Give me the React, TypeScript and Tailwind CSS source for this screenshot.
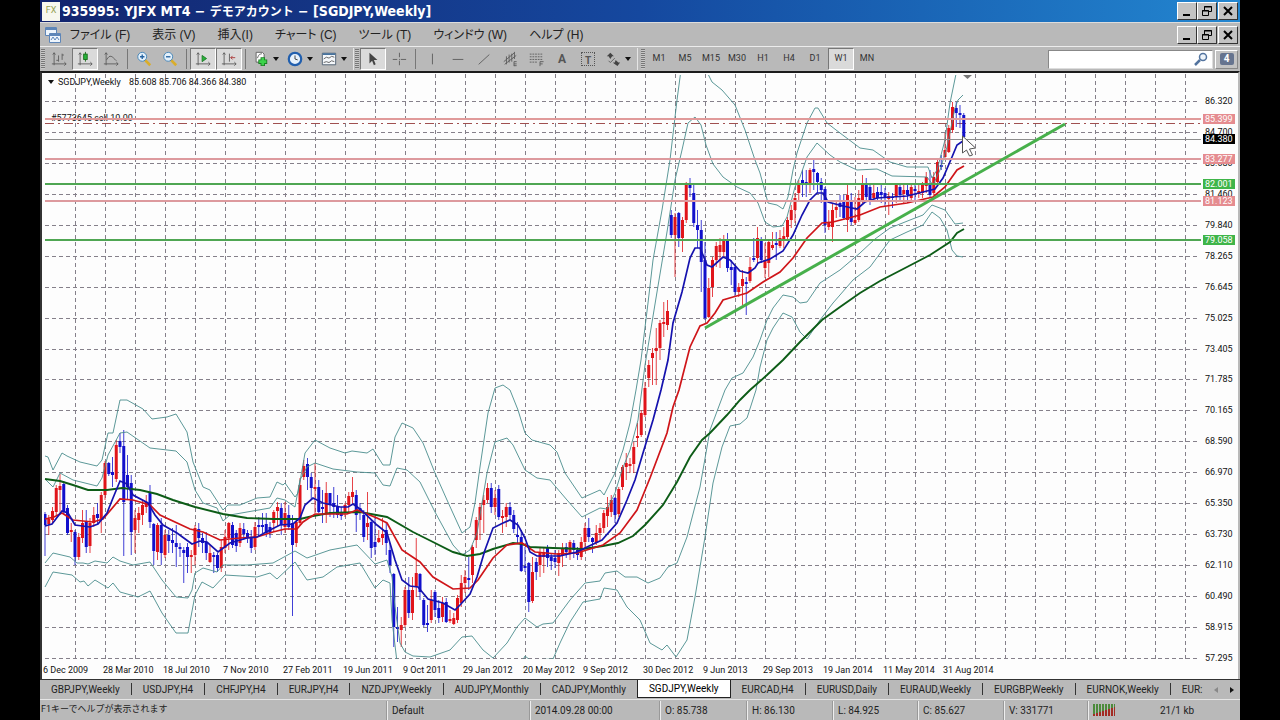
import type { ReactNode } from "react";
import clsx from "clsx";

// [high, open, close, low] on the chart's y axis, one entry per week
const candles: number[][] = [
  [512, 514, 525, 556], [515, 524, 519, 535], [507, 520, 511, 524], [485, 512, 488, 515], [474, 490, 486, 514], [481, 484, 512, 514],
  [505, 508, 533, 535], [523, 532, 530, 542], [530, 532, 557, 565], [533, 557, 537, 560], [510, 538, 523, 543], [510, 522, 547, 553],
  [518, 546, 523, 553], [507, 523, 515, 527], [503, 514, 518, 525], [492, 520, 495, 533], [461, 495, 463, 500], [462, 463, 474, 476],
  [457, 472, 475, 487], [440, 479, 445, 482], [433, 441, 447, 453], [430, 446, 502, 556], [455, 475, 487, 500], [475, 483, 532, 555],
  [510, 530, 518, 553], [507, 520, 513, 533], [500, 515, 505, 525], [495, 507, 502, 513], [485, 493, 522, 528], [523, 524, 551, 565],
  [523, 552, 525, 560], [518, 525, 553, 565], [530, 555, 535, 558], [530, 535, 541, 553], [528, 540, 543, 553], [525, 543, 547, 567],
  [543, 547, 549, 557], [547, 550, 553, 583], [543, 547, 557, 573], [550, 557, 555, 573], [525, 555, 528, 565], [523, 529, 538, 547],
  [533, 538, 543, 553], [532, 542, 553, 560], [545, 562, 553, 563], [552, 555, 557, 573], [553, 555, 568, 572], [540, 568, 547, 572],
  [530, 548, 537, 553], [522, 538, 523, 550], [522, 525, 545, 548], [530, 533, 546, 552], [523, 543, 528, 547], [523, 529, 534, 540],
  [530, 533, 537, 543], [530, 538, 548, 553], [522, 547, 527, 550], [517, 525, 527, 537], [513, 525, 527, 533], [513, 524, 533, 537],
  [522, 527, 533, 538], [510, 523, 512, 532], [502, 511, 507, 527], [503, 508, 525, 535], [502, 527, 513, 533], [505, 515, 527, 530],
  [515, 523, 545, 616], [518, 543, 522, 547], [478, 523, 485, 525], [460, 477, 466, 480], [458, 464, 477, 490], [473, 477, 488, 500],
  [463, 489, 487, 513], [480, 487, 512, 513], [490, 507, 509, 523], [482, 513, 493, 523], [493, 493, 505, 517], [487, 503, 507, 518],
  [495, 507, 515, 518], [507, 512, 516, 520], [503, 513, 505, 517], [492, 505, 496, 513], [477, 497, 492, 505], [490, 495, 515, 532],
  [503, 508, 513, 520], [510, 515, 537, 542], [492, 527, 523, 540], [520, 522, 548, 558], [517, 542, 547, 555], [530, 542, 538, 543],
  [518, 538, 534, 545], [523, 530, 543, 555], [543, 550, 565, 573], [573, 574, 627, 647], [607, 627, 629, 642], [617, 630, 625, 647],
  [587, 625, 590, 627], [577, 590, 613, 618], [577, 613, 590, 620], [538, 587, 573, 597], [573, 574, 592, 600], [598, 600, 625, 627],
  [605, 623, 625, 632], [590, 620, 600, 623], [590, 592, 610, 617], [600, 608, 618, 623], [597, 617, 603, 622], [598, 602, 622, 623],
  [610, 621, 619, 623], [613, 624, 618, 625], [595, 620, 598, 623], [575, 603, 583, 607], [570, 583, 577, 593], [557, 578, 580, 590],
  [545, 575, 547, 583], [517, 540, 520, 548], [503, 520, 507, 540], [495, 505, 500, 533], [483, 500, 488, 503], [483, 488, 507, 513],
  [490, 507, 498, 515], [485, 489, 517, 520], [510, 518, 516, 533], [503, 517, 507, 527], [502, 507, 515, 520], [510, 515, 529, 533],
  [522, 535, 537, 543], [530, 537, 571, 572], [547, 566, 568, 572], [562, 563, 602, 612], [557, 601, 572, 603], [558, 562, 572, 580],
  [548, 565, 552, 577], [547, 557, 552, 573], [545, 547, 558, 567], [553, 557, 561, 570], [550, 558, 562, 568], [550, 563, 553, 576],
  [543, 555, 548, 567], [543, 547, 552, 558], [540, 553, 542, 560], [540, 543, 550, 558], [547, 550, 555, 560], [537, 557, 542, 560],
  [523, 542, 528, 548], [518, 528, 537, 542], [537, 538, 542, 553], [525, 543, 533, 545], [523, 533, 528, 540], [510, 528, 513, 533],
  [497, 516, 507, 527], [495, 512, 500, 517], [497, 498, 515, 523], [487, 514, 489, 517], [465, 487, 467, 490], [453, 467, 463, 480],
  [458, 466, 464, 473], [442, 464, 447, 473], [423, 438, 436, 447], [410, 435, 413, 437], [382, 415, 388, 417], [360, 378, 365, 387],
  [348, 358, 353, 385], [328, 351, 348, 385], [320, 348, 323, 360], [302, 324, 322, 337], [300, 325, 311, 330], [210, 215, 235, 238],
  [213, 235, 217, 277], [212, 213, 238, 247], [217, 238, 220, 252], [182, 220, 185, 223], [178, 184, 188, 197], [185, 193, 223, 227],
  [210, 225, 230, 248], [220, 230, 262, 292], [242, 260, 318, 320], [278, 317, 288, 318], [257, 287, 260, 297], [242, 260, 246, 267],
  [238, 252, 245, 268], [235, 252, 240, 257], [233, 240, 268, 272], [260, 267, 270, 285], [265, 267, 292, 297], [283, 292, 287, 297],
  [270, 286, 279, 305], [277, 282, 284, 315], [257, 281, 267, 283], [238, 258, 260, 262], [227, 258, 238, 263], [237, 240, 260, 263],
  [243, 268, 260, 278], [240, 263, 242, 277], [232, 248, 245, 250], [232, 243, 245, 260], [230, 246, 238, 248], [227, 240, 236, 248],
  [217, 237, 220, 240], [205, 220, 210, 228], [193, 210, 198, 223], [180, 193, 183, 202], [170, 180, 185, 197], [170, 182, 184, 197],
  [168, 183, 170, 193], [160, 169, 172, 190], [172, 173, 182, 193], [178, 182, 190, 203], [187, 189, 225, 233], [210, 227, 222, 230],
  [203, 227, 210, 242], [200, 210, 207, 218], [195, 203, 207, 217], [195, 200, 218, 220], [185, 220, 195, 232], [193, 200, 222, 225],
  [197, 223, 220, 225], [190, 220, 198, 222], [175, 200, 185, 203], [178, 185, 197, 202], [185, 187, 202, 205], [185, 198, 193, 202],
  [187, 192, 198, 202], [185, 192, 195, 203], [188, 193, 198, 207], [192, 199, 196, 215], [193, 197, 198, 208], [183, 197, 185, 203],
  [183, 187, 195, 200], [183, 194, 190, 203], [185, 190, 195, 203], [185, 198, 187, 202], [185, 189, 191, 200], [185, 194, 191, 198],
  [182, 193, 185, 198], [172, 186, 177, 193], [170, 183, 195, 197], [172, 193, 177, 195], [158, 182, 162, 185], [155, 165, 167, 170],
  [133, 157, 150, 158], [125, 152, 128, 153], [102, 130, 107, 133], [102, 108, 113, 127], [105, 113, 115, 128], [113, 115, 137, 142],
];

const bands = [
  "45,456 48,457 53,470 62,453 67,456 80,462 97,466 102,460 108,433 113,433 120,400 127,400 143,409 152,419 167,417 176,414 187,432 193,462 203,487 210,490 223,510 228,505 240,505 257,498 270,497 277,482 283,485 285,483 295,497 298,493 305,453 315,440 330,448 345,453 352,451 367,453 373,449 383,465 390,465 395,437 402,423 413,428 423,443 435,473 447,500 462,533 470,527 475,503 480,467 488,413 495,388 503,385 510,390 518,410 525,433 532,440 550,445 557,452 565,473 582,498 600,490 604,495 610,483 615,473 623,450 630,423 636,390 641,360 648,303 653,260 662,210 670,160 677,100 681,70 706,70 712,82 722,90 735,105 745,130 755,160 760,173 768,203 777,205 783,209 788,197 793,170 797,153 807,123 815,108 818,108 827,123 840,133 860,148 873,150 890,162 907,167 928,167 932,178 937,170 945,140 950,103 956,74",
  "45,479 53,487 60,473 73,480 97,486 102,478 108,455 120,433 127,432 150,448 176,451 187,462 195,490 203,503 217,508 223,521 230,515 247,512 270,508 277,498 285,500 295,507 300,480 307,467 315,463 333,469 357,472 375,473 383,485 390,486 397,468 407,470 420,482 435,512 453,545 462,555 470,550 477,533 487,473 495,442 507,438 513,445 525,470 537,478 550,480 567,500 582,517 600,508 607,509 615,493 622,470 630,450 638,420 645,365 657,292 667,232 675,180 682,150 688,123 695,117 701,125 706,145 713,164 723,177 737,187 750,193 758,203 765,222 773,227 782,226 787,217 795,187 800,177 807,157 817,143 830,155 840,162 857,170 877,169 892,176 927,177 933,185 940,170 947,147 955,108 958,100 963,95",
  "45,563 53,553 70,557 77,563 83,563 88,564 95,561 107,563 113,557 120,561 133,565 150,562 162,580 176,597 188,598 192,590 195,573 203,568 217,572 223,565 247,565 273,563 295,551 307,558 330,550 357,545 375,564 387,560 392,577 395,607 400,643 405,652 413,656 430,657 450,650 462,637 472,636 483,650 493,658 507,643 517,627 525,618 537,627 543,624 553,623 570,600 585,583 600,581 605,573 617,571 625,577 637,577 648,583 660,578 668,567 677,563 687,537 700,487 710,430 725,390 732,378 743,373 753,357 760,340 767,320 773,308 783,295 793,297 800,303 807,302 820,283 840,270 860,253 875,239 890,228 910,220 923,215 932,205 945,210 955,224 963,223",
  "45,587 53,572 72,575 80,582 84,581 88,586 95,580 108,588 113,583 120,592 138,597 150,591 162,613 176,633 188,633 195,595 202,582 213,588 225,575 257,577 270,573 277,579 295,562 307,580 323,577 337,567 360,563 375,588 383,580 390,583 392,620 397,662 522,662 525,656 530,660 553,659 560,643 570,622 583,602 600,599 604,588 617,590 627,607 640,620 650,643 662,650 667,645 676,657 687,640 695,597 705,537 713,483 722,447 730,426 740,424 747,418 756,390 760,367 767,340 773,328 783,313 792,317 800,332 807,339 820,320 833,303 853,280 870,267 890,240 907,232 923,225 932,212 940,218 947,230 952,250 957,256 963,257",
];

const slowAverage =
  "45,479 60,481 73,485 88,490 107,490 122,488 140,490 157,494 173,500 195,507 223,514 247,518 273,519 300,519 313,516 330,513 360,512 387,517 413,532 433,542 453,552 467,556 480,554 493,549 513,543 522,544 530,547 553,548 583,549 603,546 618,543 633,536 645,525 663,505 677,482 690,457 702,440 710,433 727,415 740,400 750,390 767,375 783,360 800,342 822,320 840,307 860,293 880,281 907,267 930,255 950,242 957,233 964,229";
const midAverage =
  "45,519 54,517 62,513 73,520 93,522 103,519 120,499 133,500 150,505 160,515 190,529 203,532 220,540 240,538 257,537 273,532 285,529 297,529 303,522 315,514 347,514 357,510 377,518 387,523 402,550 420,562 433,577 453,589 470,588 478,580 493,558 507,545 522,543 535,552 557,554 577,553 590,549 603,545 620,533 637,510 650,478 667,433 673,407 679,390 690,347 700,326 707,323 715,313 723,300 733,297 747,293 763,282 780,272 793,258 807,238 822,223 833,222 860,215 880,207 907,203 933,197 945,187 957,170 964,166";
const fastAverage =
  "45,526 52,524 62,511 68,513 75,525 90,527 98,524 107,513 113,498 120,481 127,484 133,495 148,503 155,515 163,525 177,533 192,544 200,541 207,542 218,552 230,543 247,538 257,537 270,530 280,525 293,524 300,518 305,505 313,498 323,503 340,507 348,507 353,504 360,509 377,525 387,533 395,560 402,580 410,586 418,587 428,599 443,603 455,610 460,605 470,594 477,577 485,550 493,528 503,523 510,520 518,525 525,538 530,552 537,556 560,556 577,552 587,547 602,540 617,523 627,500 635,480 643,453 653,420 661,390 668,360 673,323 682,292 690,258 695,248 700,248 703,255 707,265 712,267 723,257 730,260 740,271 748,273 755,268 758,263 770,259 783,251 793,235 802,215 810,200 817,193 823,193 828,202 843,206 857,209 865,202 877,198 907,196 927,191 935,189 943,178 952,157 957,145 963,141";

const prices = ["86.320", "84.700", "83.080", "81.460", "79.840", "78.265", "76.645", "75.025", "73.405", "71.785", "70.165", "68.590", "66.970", "65.350", "63.730", "62.110", "60.490", "58.915", "57.295"];
const dates = ["6 Dec 2009", "28 Mar 2010", "18 Jul 2010", "7 Nov 2010", "27 Feb 2011", "19 Jun 2011", "9 Oct 2011", "29 Jan 2012", "20 May 2012", "9 Sep 2012", "30 Dec 2012", "9 Jun 2013", "29 Sep 2013", "19 Jan 2014", "11 May 2014", "31 Aug 2014"];
const levels = [
  { price: "84.380", y: 139, line: "#8c8c8c", tag: "#000000", width: 1 },
  { price: "85.399", y: 119, line: "#e09a9a", tag: "#e58c90", width: 2 },
  { price: "83.277", y: 159, line: "#dd9a9e", tag: "#e58c90", width: 2 },
  { price: "82.001", y: 184, line: "#4fa653", tag: "#3fb549", width: 2 },
  { price: "81.123", y: 201, line: "#dd9a9e", tag: "#e58c90", width: 2 },
  { price: "79.058", y: 240, line: "#4fa653", tag: "#3fb549", width: 2 },
];

const menus = ["ファイル (F)", "表示 (V)", "挿入(I)", "チャート (C)", "ツール (T)", "ウィンドウ (W)", "ヘルプ (H)"];
const periods = ["M1", "M5", "M15", "M30", "H1", "H4", "D1", "W1", "MN"];
const tabs = ["GBPJPY,Weekly", "USDJPY,H4", "CHFJPY,H4", "EURJPY,H4", "NZDJPY,Weekly", "AUDJPY,Monthly", "CADJPY,Monthly", "SGDJPY,Weekly", "EURCAD,H4", "EURUSD,Daily", "EURAUD,Weekly", "EURGBP,Weekly", "EURNOK,Weekly", "EUR:"];

function WindowButtons() {
  const button = "grid h-[18px] w-5 place-items-center border border-t-white border-l-white border-r-[#333] border-b-[#333] bg-[#c3c3c3]";
  return (
    <div className="flex shrink-0">
      <button className={button} aria-label="Minimize">
        <svg width="12" height="12"><path d="M2 10h7" stroke="#000" strokeWidth="2" /></svg>
      </button>
      <button className={button} aria-label="Restore">
        <svg width="12" height="12" fill="none" stroke="#000"><path d="M3.5 5V1.5h7v5H8M3 2h8M1.5 5.5h6v5h-6zM1 6h7" /></svg>
      </button>
      <button className={clsx(button, "ml-px")} aria-label="Close">
        <svg width="12" height="12"><path d="M2 2l8 8M10 2l-8 8" stroke="#000" strokeWidth="2" /></svg>
      </button>
    </div>
  );
}

function Tool({ label, pressed, menu, children }: { label: string; pressed?: boolean; menu?: boolean; children: ReactNode }) {
  return (
    <button
      aria-label={label}
      className={clsx(
        "flex h-[22px] shrink-0 items-center justify-center border",
        menu ? "w-[34px] gap-1" : "w-[26px]",
        pressed ? "border-t-[#777] border-l-[#777] border-r-white border-b-white bg-[#dadada]" : "border-transparent",
      )}
    >
      <svg width="16" height="16" viewBox="0 0 18 18" fill="none" stroke="#5a5a5a" className="shrink-0">{children}</svg>
      {menu && <svg width="6" height="4" className="shrink-0"><path d="M0 0h6L3 4z" fill="#111" /></svg>}
    </button>
  );
}

const Separator = () => <div className="mx-[3px] h-5 w-px shrink-0 bg-[#777]" />;
const Grip = () => <div className="h-5 w-1.5 shrink-0 border-x border-[#b9b9b9] bg-[repeating-linear-gradient(to_bottom,#777_0_1px,#c8c8c8_1px_2px)]" />;
const axes = "M3.5 2v14M1 14.5h16M15 12.5l2 2-2 2M2 4l1.5-2L5 4";

function Toolbar() {
  return (
    <div className="flex h-[25px] items-center gap-0.5 border-t border-[#ececec] bg-[#b9b9b9] pr-0.5 font-[Roboto,sans-serif]">
      <div className="flex items-center">
        <Grip />
        <Tool label="Bar chart"><path d={axes} /><path d="M8.5 5v7M6 10.5h2M12.5 3v7M12.5 4.5h2" /></Tool>
        <Tool label="Candlesticks" pressed><path d={axes} /><path d="M9.500 1v11" stroke="#176b17" /><rect x="7.500" y="3.500" width="4" height="6" fill="#27b33a" stroke="#176b17" /></Tool>
        <Tool label="Line chart"><path d={axes} /><path d="M4 10c4-7 6-4 11 1" /></Tool>
        <Separator />
        <Tool label="Zoom in"><path d="M10 10l6 6" stroke="#d9ad2b" strokeWidth="3" /><circle cx="7" cy="6.500" r="5" fill="#e4f1fb" stroke="#3d7fb6" /><path d="M4.500 6.500h5M7 4v5" stroke="#2462a0" strokeWidth="1.500" /></Tool>
        <Tool label="Zoom out"><path d="M10 10l6 6" stroke="#d9ad2b" strokeWidth="3" /><circle cx="7" cy="6.500" r="5" fill="#e4f1fb" stroke="#3d7fb6" /><path d="M4.500 6.500h5" stroke="#2462a0" strokeWidth="1.500" /></Tool>
        <Separator />
        <Tool label="Auto scroll" pressed><path d={axes} /><path d="M8 5v7l5-3.500z" fill="#27b33a" stroke="#1c7a28" /></Tool>
        <Tool label="Chart shift" pressed><path d={axes} /><path d="M9.500 3v9" /><path d="M16 7.500h-5M13 5.500l-2 2 2 2" stroke="#a83232" /></Tool>
        <Separator />
        <Tool label="Indicators" menu><path d="M3.500 1.500h7l2 2v9h-9z" fill="#fff" /><path d="M5 8c2-5 2-4 5-5" /><path d="M11 7v10M6 12h10" stroke="#1d7d26" strokeWidth="5" /><path d="M11 8v8M7 12h8" stroke="#3bd34a" strokeWidth="3" /></Tool>
        <Tool label="Periods" menu><circle cx="9" cy="9" r="7" fill="#e8f2fc" stroke="#215fae" strokeWidth="2.500" /><path d="M9 5v4l3 1" stroke="#333" /></Tool>
        <Tool label="Templates" menu><path d="M1.500 2.500h15v13h-15z" fill="#f5f8fb" stroke="#47596c" /><path d="M2 3.500h14" stroke="#47739e" strokeWidth="2" /><path d="M3 9l3-2 3 1 3-2 3 1M3 13l3-1 3 1 3-2 3 1" /></Tool>
      </div>
      <div className="flex items-center border-l border-[#e5e5e5]">
        <Grip />
        <Tool label="Cursor" pressed><path d="M5 2v12l3-3 2 5 2-1-2-5h4z" fill="#444" stroke="none" /></Tool>
        <Tool label="Crosshair"><path d="M9.500 2v5M9.500 11v5M2 9.500h5M11 9.500h6M9 9.500h1" /></Tool>
        <Separator />
        <Tool label="Vertical line"><path d="M9.500 3v12" /></Tool>
        <Tool label="Horizontal line"><path d="M3 9.500h12" /></Tool>
        <Tool label="Trendline"><path d="M3 15L15 4" /></Tool>
        <Tool label="Equidistant channel"><path d="M2 12L14 2M3 15L16 5M5 6v9M8 4v9M11 3v9M14 1v8M13.500 17v-5h3M13.500 14.500h3M13.500 16.500h3" /></Tool>
        <Tool label="Fibonacci retracement"><path d="M2 3.500h14M2 6.500h14M2 9.500h14M2 12.500h9" strokeDasharray="2 1" /><path d="M13.500 17v-5h4M13.500 14.500h3" /></Tool>
        <button aria-label="Text" className="h-[22px] w-[26px] shrink-0 text-[12px] font-bold text-[#555]">A</button>
        <button aria-label="Text label" className="grid h-[22px] w-[26px] shrink-0 place-items-center text-[10px] font-bold text-[#555]"><span className="grid h-3.5 w-3.5 place-items-center border border-dotted border-[#555]">T</span></button>
        <Tool label="Arrows" menu><path d="M2 6l4-4 4 4-2 0-2 3-2-3zM9 13h2l1-3 3 3h2l-3 4-4-3z" fill="#444" stroke="none" /><path d="M4 11l2 2 5-5" /></Tool>
      </div>
      <div className="flex items-center border-l border-[#e5e5e5] pl-0.5">
        <Grip />
        {periods.map((period) => (
          <button key={period} className={clsx("h-[22px] w-[26px] shrink-0 border text-[9px] text-[#333]", period === "W1" ? "border-t-[#777] border-l-[#777] border-r-white border-b-white bg-[#dadada]" : "border-transparent")}>{period}</button>
        ))}
      </div>
      <label className="ml-auto flex h-[19px] w-[165px] min-w-0 items-center border border-t-[#888] border-l-[#888] border-[#ddd] bg-white pr-1">
        <input aria-label="Search" className="min-w-0 flex-1 bg-transparent px-1 text-[10px] outline-none" />
        <svg width="14" height="14" fill="none" stroke="#53749f"><path d="M6 8l-5 5" strokeWidth="2.500" /><circle cx="9" cy="5" r="3.500" fill="#eef4fa" strokeWidth="1.500" /></svg>
      </label>
      <button aria-label="Messages" className="grid h-[19px] w-[23px] shrink-0 place-items-center border border-t-white border-l-white border-[#888] bg-[#c3c3c3]">
        <span className="h-3 w-3.5 rounded-xs bg-[#66748f] text-center text-[10px] leading-3 font-bold text-white">4</span>
      </button>
    </div>
  );
}

function Chart() {
  return (
    <svg viewBox="42 73 1196 606" className="block h-auto w-full bg-[#fdfdfd] font-[Roboto,sans-serif] text-[9px]" fill="none" role="img" aria-label="SGDJPY weekly chart">
      <clipPath id="plot"><rect x="44" y="75" width="1157" height="584" /></clipPath>
      <g stroke="#85808a" strokeDasharray="4 3" shapeRendering="crispEdges">
        {Array.from({ length: 38 }, (_, i) => <path key={i} d={`M${75.5 + i * 30} 74V661`} />)}
        {prices.map((price, i) => <path key={price} d={`M45 ${Math.round(101 + i * 30.94) + 0.5}H1200`} />)}
      </g>
      <path d="M45 123.500H1200" stroke="#a05050" strokeDasharray="9 4 2 4" />
      <text x="51" y="121" fill="#111">#5773645 sell 10.00</text>
      <g clipPath="url(#plot)">
        {candles.map(([high, open, close, low], i) => {
          const x = 45 + i * 3.75;
          const color = open > close ? "#e0141a" : "#1210cc";
          return (
            <g key={i}>
              <path d={`M${x} ${high}V${low}`} stroke={color} strokeOpacity="0.8" />
              <rect x={x - 1.5} y={Math.min(open, close)} width="3" height={Math.abs(open - close)} fill={color} />
            </g>
          );
        })}
        {bands.map((points, i) => <polyline key={i} points={points} stroke="#4a8c8c" strokeWidth="0.9" />)}
        <polyline points={slowAverage} stroke="#0d5c17" strokeWidth="1.900" />
        <polyline points={midAverage} stroke="#cf1519" strokeWidth="1.700" />
        <polyline points={fastAverage} stroke="#1512ae" strokeWidth="1.700" />
      </g>
      {levels.map((level) => <path key={level.price} d={`M45 ${level.width === 1 ? level.y + 0.5 : level.y}H1201`} stroke={level.line} strokeWidth={level.width} />)}
      <path d="M705 328L1065 124" stroke="#47b04b" strokeWidth="3" />
      <path d="M963 75h9l-4.500 4z" fill="#777" />
      <g fill="#111">
        <path d="M48 80h6l-3 4z" />
        <text x="58" y="85">SGDJPY,Weekly</text>
        <text x="129" y="85">85.608 85.706 84.366 84.380</text>
        {prices.map((price, i) => <text key={price} x="1205" y={Math.round(104 + i * 30.94)}>{price}</text>)}
        {dates.map((date, i) => <text key={date} x={43 + i * 60} y="673">{date}</text>)}
      </g>
      {levels.map((level) => (
        <g key={level.price}>
          <rect x="1203" y={level.y - 5} width="32" height="10" fill={level.tag} />
          <text x="1205" y={level.y + 3} fill="#fff">{level.price}</text>
        </g>
      ))}
      <path d="M962.500 136v17l4-3 3 6 3-1-3-6 6-1z" fill="#fff" stroke="#555" />
    </svg>
  );
}

function StatusCell({ className, children }: { className: string; children?: ReactNode }) {
  return <div className={clsx("flex h-[19px] shrink-0 items-center border-l border-[#eee] pl-1 shadow-[-1px_0_0_#999]", className)}>{children}</div>;
}

export default function App() {
  return (
    <div className="min-h-screen bg-black px-10">
      <div className="flex min-h-screen flex-col overflow-hidden bg-[#b9b9b9] text-[#222]">
        <header className="flex h-[22px] items-center bg-linear-to-r from-[#12246e] via-[#15489f] to-[#2386d0] pr-0.5 pl-0.5">
          <span className="mr-0.5 grid h-[19px] w-[18px] shrink-0 place-items-center bg-[#f7f7ee] font-[Roboto,sans-serif] text-[9px] text-[#94a050]">FX</span>
          <h1 className="flex-1 truncate font-['DejaVu_Sans_Condensed','DejaVu_Sans','Noto_Sans_CJK_JP',sans-serif] text-[14px] leading-[22px] font-bold text-white">
            935995: YJFX MT4 − <span className="text-[12px]">デモアカウント</span> − [SGDJPY,Weekly]
          </h1>
          <WindowButtons />
        </header>
        <nav className="flex h-6 items-center border-t border-[#ddd] pr-0.5 pl-1">
          <svg width="18" height="18" viewBox="0 0 18 18" fill="#eef5fc" stroke="#5e86b8" className="mr-2 shrink-0">
            <path d="M1.500 1.500h11v8h-11zM5.500 7.500h11v9h-11z" /><path d="M1 3h12M5 9h12" strokeWidth="2" /><path d="M7 14l2-3 2 3 2-3 2 3" />
          </svg>
          <div className="flex min-w-0 flex-1 gap-[22px] overflow-hidden font-['Liberation_Sans','Noto_Sans_CJK_JP',sans-serif] text-[12px] leading-5 whitespace-nowrap [font-feature-settings:'palt']">
            {menus.map((menu) => <button key={menu}>{menu}</button>)}
          </div>
          <WindowButtons />
        </nav>
        <Toolbar />
        <main className="border-t-2 border-r-2 border-l-2 border-t-[#1c1c1c] border-r-[#b9b9b9] border-l-[#333]">
          <Chart />
        </main>
        <nav className="flex h-5 border-t border-[#333] font-[Roboto,sans-serif] text-[10px]">
          <div className="flex min-w-0 flex-1 overflow-hidden">
            {tabs.map((tab, i) => (
              <button
                key={tab}
                className={clsx(
                  "flex h-[18px] shrink-0 items-center px-[11px]",
                  tab === "SGDJPY,Weekly" ? "border-x border-b border-[#222] bg-white text-black" : "",
                )}
              >
                {tab}
                {i !== 6 && i !== 7 && i < 13 && <span className="-mr-[11px] ml-[11px] h-3 w-px bg-[#333]" />}
              </button>
            ))}
          </div>
          <button aria-label="Previous tabs" className="grid w-4 place-items-center"><svg width="4" height="6"><path d="M4 0v6L0 3z" fill="#888" /></svg></button>
          <button aria-label="Next tabs" className="grid w-4 place-items-center"><svg width="4" height="6"><path d="M0 0v6l4-3z" fill="#111" /></svg></button>
        </nav>
        <footer className="flex flex-1 items-center border-t border-[#e5e5e5] font-[Roboto,'Noto_Sans_CJK_JP',sans-serif] text-[10px] whitespace-nowrap">
          <div className="min-w-0 flex-1 truncate pl-px text-[9px]">F1キーでヘルプが表示されます</div>
          <StatusCell className="w-[143px]">Default</StatusCell>
          <StatusCell className="w-[130px]">2014.09.28 00:00</StatusCell>
          <StatusCell className="w-[87px]">O: 85.738</StatusCell>
          <StatusCell className="w-[86px]">H: 86.130</StatusCell>
          <StatusCell className="w-[85px]">L: 84.925</StatusCell>
          <StatusCell className="w-[86px]">C: 85.627</StatusCell>
          <StatusCell className="w-[84px]">V: 331771</StatusCell>
          <StatusCell className="w-[152px]">
            <svg width="22" height="12">
              {Array.from({ length: 8 }, (_, i) => (
                <g key={i}><rect x={i * 3} width="2" height={10 - i} fill="#4c8b3b" /><rect x={i * 3} y={10 - i} width="2" height={2 + i} fill="#a32c24" /></g>
              ))}
            </svg>
            <span className="ml-[45px]">21/1 kb</span>
          </StatusCell>
        </footer>
      </div>
    </div>
  );
}
